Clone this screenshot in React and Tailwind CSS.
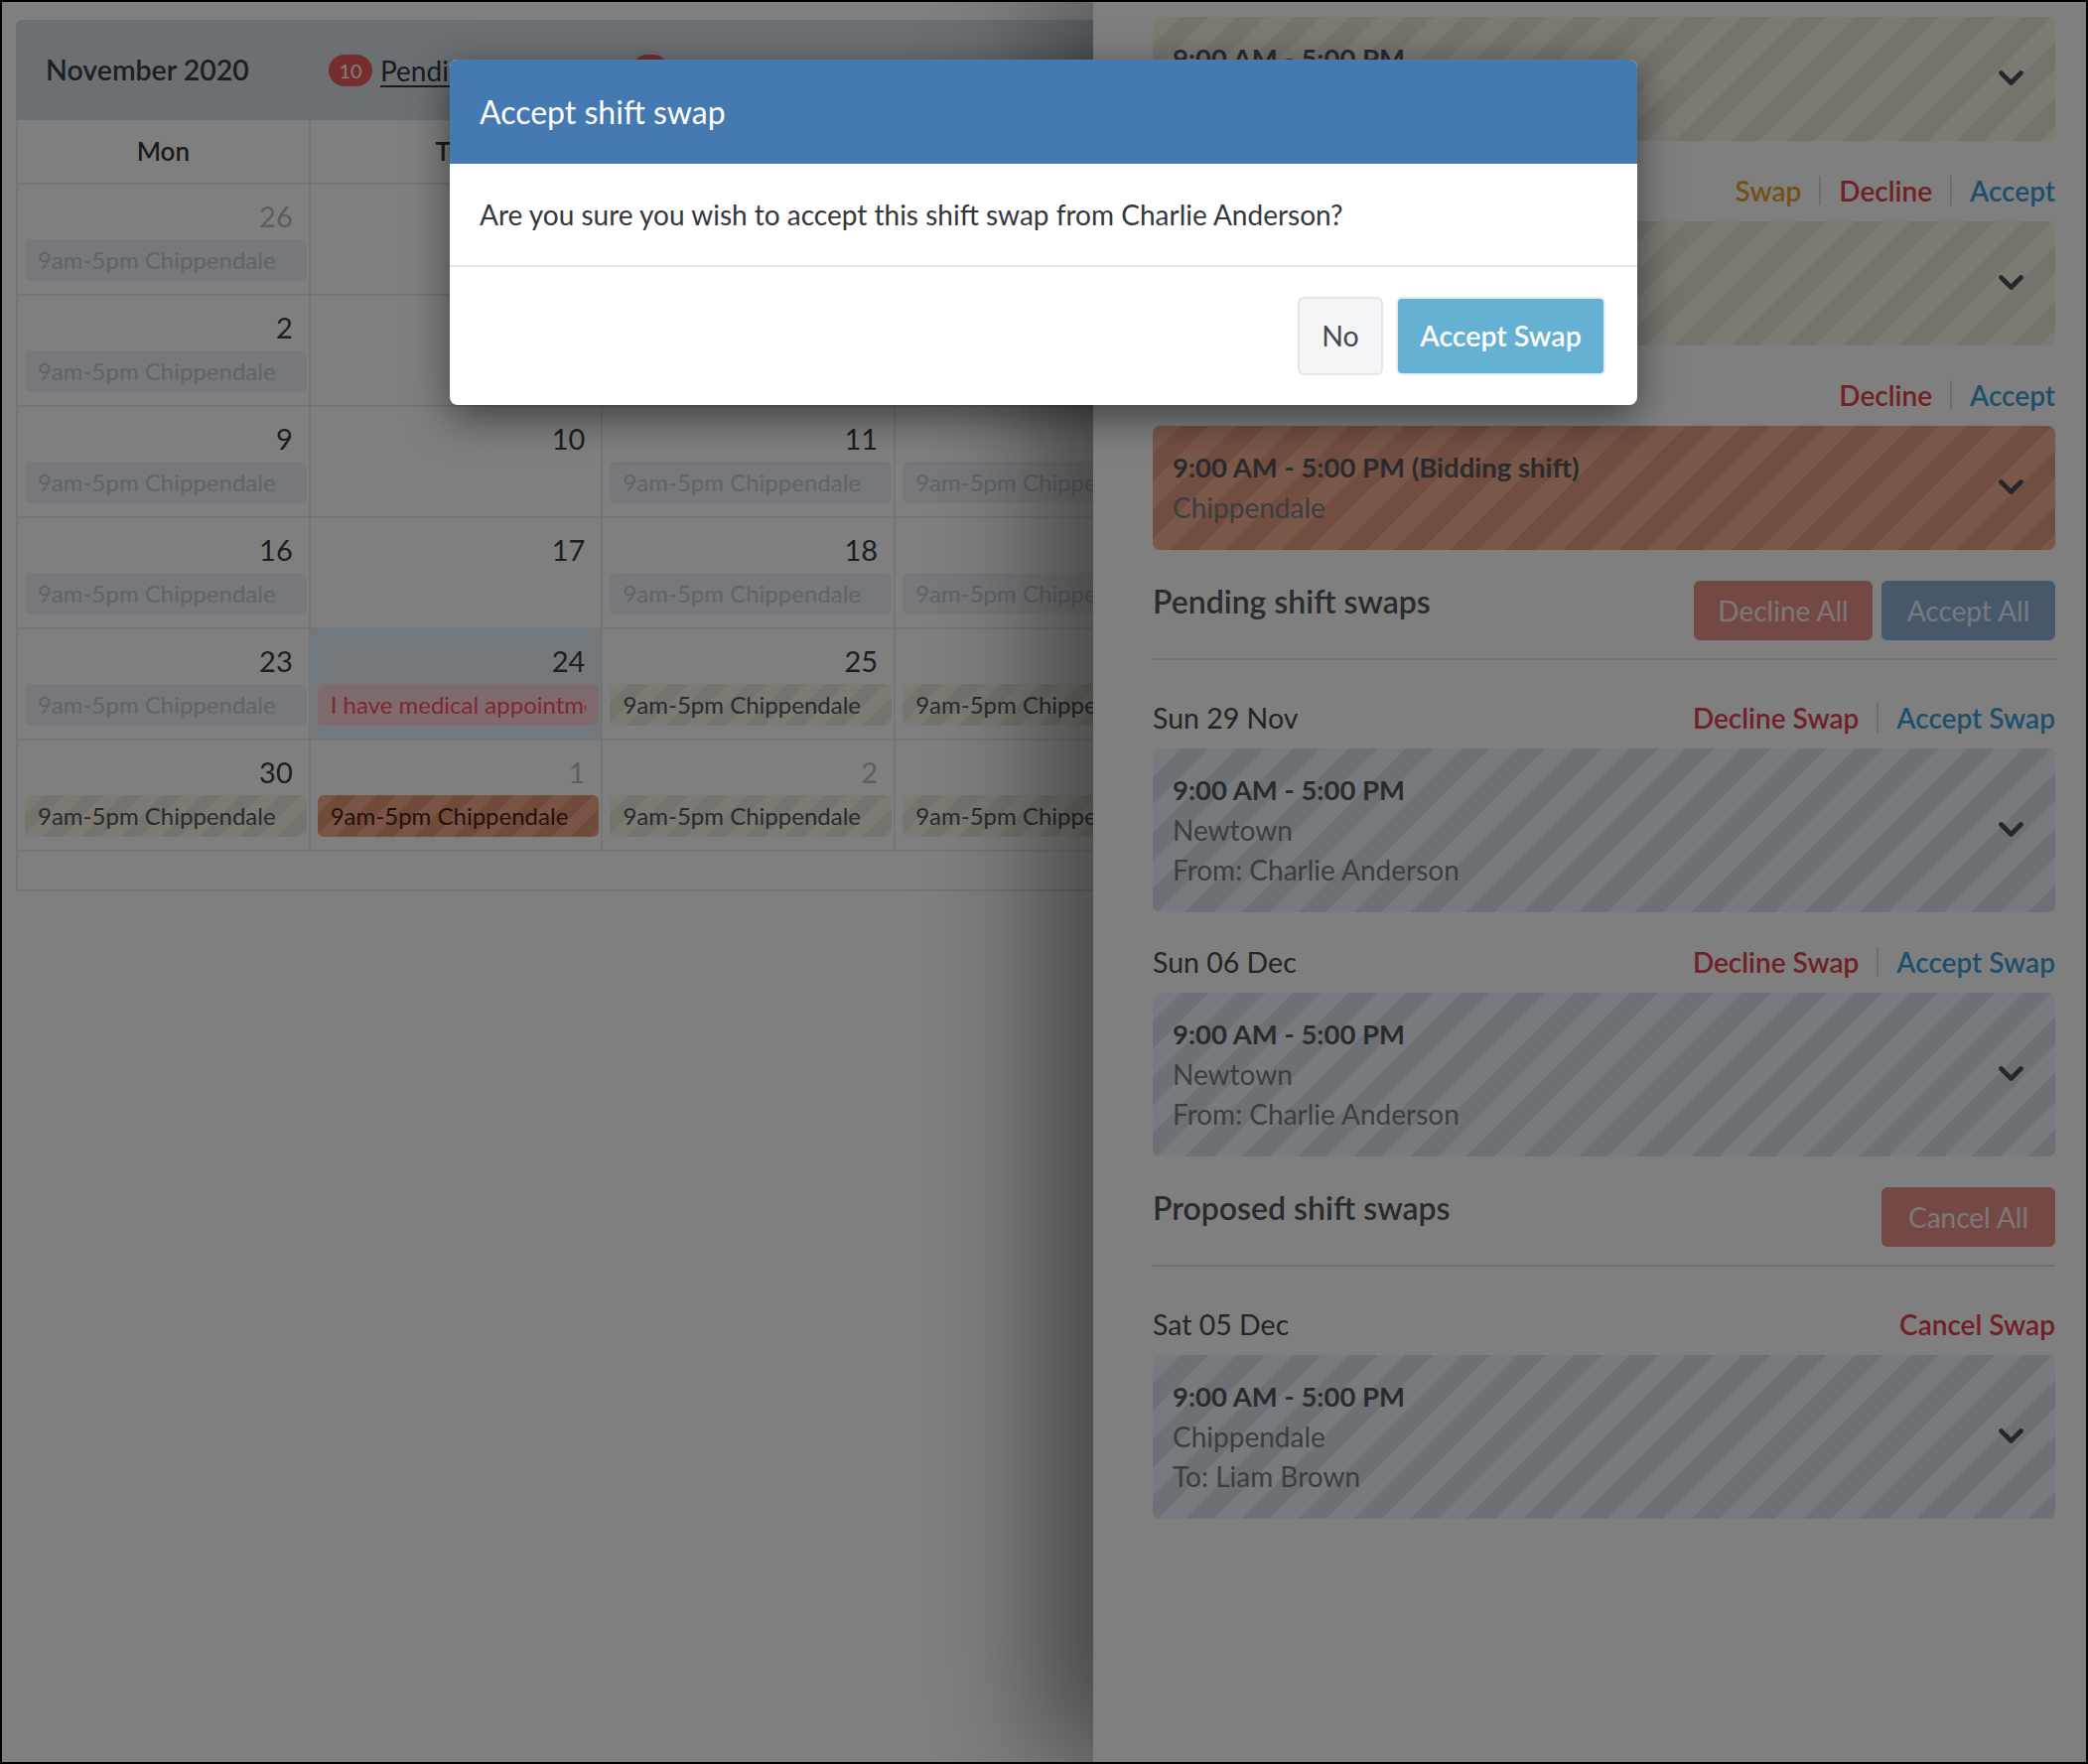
import React from 'react';

const weeks = [
  [26, 27, 28, 29, 30, 31, 1],
  [2, 3, 4, 5, 6, 7, 8],
  [9, 10, 11, 12, 13, 14, 15],
  [16, 17, 18, 19, 20, 21, 22],
  [23, 24, 25, 26, 27, 28, 29],
  [30, 1, 2, 3, 4, 5, 6],
];

const days = ['Mon', 'Tue', 'Wed', 'Thu', 'Fri', 'Sat', 'Sun'];

const PILL = {
  faded: 'bg-[#edf1f6] text-[#c3c8ce]',
  beige: 'bg-[repeating-linear-gradient(135deg,#f9f5e7_0px,#f9f5e7_14px,#ebe7da_14px,#ebe7da_28px)] text-[#50555c]',
  orange: 'bg-[repeating-linear-gradient(135deg,#f4a888_0px,#f4a888_14px,#e59474_14px,#e59474_28px)] text-[#3e241a]',
  pink: 'bg-[#ffd6dc] text-[#ff4d63]',
};

const CARD = {
  beige: 'bg-[repeating-linear-gradient(135deg,#f8f4e6_0px,#f8f4e6_20px,#eae6d9_20px,#eae6d9_40px)]',
  orange: 'bg-[repeating-linear-gradient(135deg,#f2ae92_0px,#f2ae92_20px,#e39c80_20px,#e39c80_40px)]',
  blue: 'bg-[repeating-linear-gradient(135deg,#eef5fc_0px,#eef5fc_20px,#dbe3eb_20px,#dbe3eb_40px)]',
};

// which cells carry a shift pill: "row-col" -> [kind, label]
const shifts = {
  '0-0': ['faded'], '0-2': ['faded'], '0-3': ['faded'],
  '1-0': ['faded'], '1-2': ['faded'], '1-3': ['faded'],
  '2-0': ['faded'], '2-2': ['faded'], '2-3': ['faded'],
  '3-0': ['faded'], '3-2': ['faded'], '3-3': ['faded'],
  '4-0': ['faded'], '4-1': ['pink', 'I have medical appointment'], '4-2': ['beige'], '4-3': ['beige'],
  '5-0': ['beige'], '5-1': ['orange'], '5-2': ['beige'], '5-3': ['beige'],
};

function Cell({ day, row, col }) {
  const muted = (row === 0 && col < 6) || (row === 5 && col > 0);
  const today = row === 4 && col === 1;
  const s = shifts[`${row}-${col}`];
  return (
    <div className={`h-[112px] border-r-2 border-b-2 border-[#ebebeb] ${today ? 'bg-[#e6f1fb]' : 'bg-white'}`}>
      <div className={`pt-[15px] pr-[16px] text-right text-[29px] leading-[34px] ${muted ? 'text-[#b8bbc0]' : 'text-[#3a3d42]'}`}>{day}</div>
      {s && (
        <div className={`mt-[6px] ml-[7px] mr-[2px] h-[42px] rounded-[6px] px-[13px] flex items-center text-[24px] ${PILL[s[0]]}`}>
          <span className="block overflow-hidden whitespace-nowrap">{s[1] || '9am-5pm Chippendale'}</span>
        </div>
      )}
    </div>
  );
}

function Calendar() {
  return (
    <div className="ml-[14px] mt-[18px] w-[2065px]">
      <div className="h-[101px] rounded-t-[6px] bg-[#d8e0e6] flex items-center pl-[30px]">
        <div className="w-[285px] text-[28.5px] font-semibold text-[#37414b]">November 2020</div>
        <span className="w-[44px] h-[32px] rounded-full bg-[#ec5a5a] text-white text-[20px] flex items-center justify-center">10</span>
        <span className="ml-[8px] text-[28px] text-[#33373c] underline underline-offset-4">Pending Shifts</span>
        <span className="ml-[78px] w-[38px] h-[32px] rounded-full bg-[#ec5a5a] text-white text-[20px] flex items-center justify-center">1</span>
        <span className="ml-[6px] text-[28px] text-[#33373c] underline underline-offset-4">Proposed Swaps</span>
      </div>
      <div className="border-l-2 border-[#ebebeb]">
        <div className="grid grid-cols-7 h-[65px] border-b-2 border-[#ebebeb]">
          {days.map((d) => (
            <div key={d} className="flex items-center justify-center border-r-2 border-[#ebebeb] text-[26px] font-semibold text-[#34373c]">{d}</div>
          ))}
        </div>
        {weeks.map((w, r) => (
          <div key={r} className="grid grid-cols-7">
            {w.map((d, c) => <Cell key={c} day={d} row={r} col={c} />)}
          </div>
        ))}
        <div className="h-[40px] border-b-2 border-[#e6e6e6]" />
      </div>
    </div>
  );
}

function Chevron() {
  return (
    <svg width="27" height="18" viewBox="0 0 27 18" fill="none" className="shrink-0">
      <polyline points="3.5,3.5 13.5,13.5 23.5,3.5" stroke="#4a4f55" strokeWidth="4.6" strokeLinecap="round" strokeLinejoin="round" />
    </svg>
  );
}

function ShiftCard({ tone, lines }) {
  return (
    <div className={`rounded-[7px] pl-[20px] pr-[31px] pt-[22px] pb-[23px] flex items-center justify-between ${CARD[tone]}`}>
      <div className="leading-[40px]">
        {lines.map((l, i) => (
          <div key={i} className={i === 0 ? 'text-[27.5px] font-bold text-[#53575e]' : 'text-[28px] text-[#767b83]'}>{l}</div>
        ))}
      </div>
      <Chevron />
    </div>
  );
}

function Sep() {
  return <span className="mx-[18px] w-[2px] h-[30px] bg-[#d9dbde]" />;
}

function ItemHead({ date, actions }) {
  const color = { Swap: 'text-[#e2a52c]', Decline: 'text-[#e2404f]', Accept: 'text-[#3a9fd6]', 'Decline Swap': 'text-[#e2404f]', 'Accept Swap': 'text-[#3a9fd6]', 'Cancel Swap': 'text-[#e2404f]' };
  return (
    <div className="mt-[30px] mb-[11px] h-[40px] flex items-center justify-between">
      <span className="text-[28.5px] leading-[40px] text-[#45484d]">{date}</span>
      <div className="flex items-center">
        {actions.map((a, i) => (
          <React.Fragment key={a}>
            {i > 0 && <Sep />}
            <span className={`text-[28px] leading-[40px] font-semibold ${color[a]}`}>{a}</span>
          </React.Fragment>
        ))}
      </div>
    </div>
  );
}

function SectionHead({ title, children }) {
  return (
    <div className="mt-[31px] pb-[18px] border-b-2 border-[#e2e2e2] flex items-start justify-between">
      <h2 className="text-[32px] leading-[42px] font-semibold text-[#53565c]">{title}</h2>
      <div className="flex gap-[9px]">{children}</div>
    </div>
  );
}

function Drawer() {
  return (
    <div className="absolute top-0 right-0 bottom-0 w-[1000px] bg-white shadow-[-50px_0_110px_rgba(0,0,0,0.45)] pl-[60px] pr-[31px] pt-[15px]">
      <ShiftCard tone="beige" lines={['9:00 AM - 5:00 PM', 'Chippendale']} />
      <ItemHead date="" actions={['Swap', 'Decline', 'Accept']} />
      <ShiftCard tone="beige" lines={['9:00 AM - 5:00 PM', 'Chippendale']} />
      <ItemHead date="" actions={['Decline', 'Accept']} />
      <ShiftCard tone="orange" lines={['9:00 AM - 5:00 PM (Bidding shift)', 'Chippendale']} />

      <SectionHead title="Pending shift swaps">
        <button className="w-[180px] h-[60px] rounded-[6px] bg-[#e8928b] text-[28px] text-[#fbeeee]">Decline All</button>
        <button className="w-[175px] h-[60px] rounded-[6px] bg-[#8fb0d6] text-[28px] text-[#eef3f9]">Accept All</button>
      </SectionHead>
      <div className="pt-[8px]">
        <ItemHead date="Sun 29 Nov" actions={['Decline Swap', 'Accept Swap']} />
        <ShiftCard tone="blue" lines={['9:00 AM - 5:00 PM', 'Newtown', 'From: Charlie Anderson']} />
        <ItemHead date="Sun 06 Dec" actions={['Decline Swap', 'Accept Swap']} />
        <ShiftCard tone="blue" lines={['9:00 AM - 5:00 PM', 'Newtown', 'From: Charlie Anderson']} />
      </div>

      <SectionHead title="Proposed shift swaps">
        <button className="w-[175px] h-[60px] rounded-[6px] bg-[#e8928b] text-[28px] text-[#fbeeee]">Cancel All</button>
      </SectionHead>
      <div className="pt-[8px]">
        <ItemHead date="Sat 05 Dec" actions={['Cancel Swap']} />
        <ShiftCard tone="blue" lines={['9:00 AM - 5:00 PM', 'Chippendale', 'To: Liam Brown']} />
      </div>
    </div>
  );
}

function Modal() {
  return (
    <div className="absolute left-[451px] top-[58px] w-[1196px] rounded-[8px] overflow-hidden bg-white shadow-[0_12px_40px_rgba(0,0,0,0.5)]">
      <div className="h-[105px] bg-[#4579b2] px-[30px] flex items-center">
        <h3 className="text-[32px] text-white">Accept shift swap</h3>
      </div>
      <div className="h-[102px] px-[30px] flex items-center text-[28px] text-[#34383d]">
        Are you sure you wish to accept this shift swap from Charlie Anderson?
      </div>
      <div className="border-t-2 border-[#e6e6e6] px-[32px] py-[30px] flex justify-end gap-[13px]">
        <button className="w-[86px] h-[79px] rounded-[6px] border-2 border-[#e3e5e8] bg-[#f4f5f7] text-[28.5px] text-[#45484d]">No</button>
        <button className="w-[211px] h-[79px] rounded-[6px] border-2 border-[#e1eef5] bg-[#64b1d4] text-[28.5px] font-semibold text-white">Accept Swap</button>
      </div>
    </div>
  );
}

export default function App() {
  return (
    <div className="relative w-[2103px] h-[1777px] overflow-hidden border-2 border-black bg-white font-['Lato','Liberation_Sans',sans-serif]">
      <Calendar />
      <Drawer />
      <div className="absolute inset-0 bg-black/50" />
      <Modal />
    </div>
  );
}
